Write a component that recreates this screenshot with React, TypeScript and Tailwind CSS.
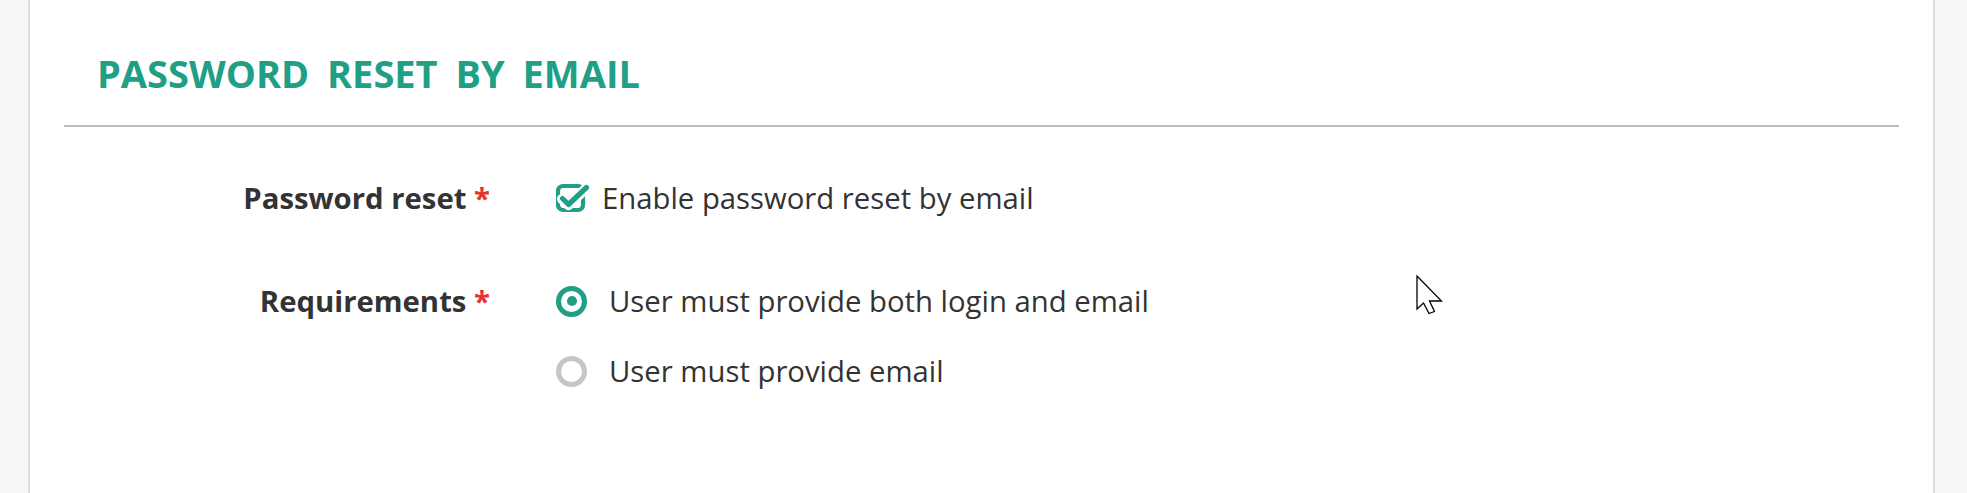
import React from "react";

const TEAL = "#1fa086";

function CheckIcon() {
  return (
    <svg width="34" height="32" viewBox="0 0 34 32" className="block">
      <rect x="2" y="4" width="25" height="24" rx="5" fill="none" stroke={TEAL} strokeWidth="4.2" />
      <path d="M6 17 L12.5 23 L31 5.5" fill="none" stroke="#ffffff" strokeWidth="10" strokeLinecap="round" strokeLinejoin="round" />
      <path d="M6.5 16.5 L12.5 22.5 L30.5 5.5" fill="none" stroke={TEAL} strokeWidth="5.2" strokeLinecap="round" strokeLinejoin="round" />
    </svg>
  );
}

function Radio({ checked }: { checked: boolean }) {
  return checked ? (
    <span className="flex h-[31px] w-[31px] shrink-0 items-center justify-center rounded-full border-[5px] border-[#1fa086]">
      <span className="h-[10px] w-[10px] rounded-full bg-[#1fa086]" />
    </span>
  ) : (
    <span className="h-[31px] w-[31px] shrink-0 rounded-full border-[5px] border-[#c3c6cb]" />
  );
}

function Cursor() {
  return (
    <svg width="28" height="40" viewBox="-1 -1 28 40" className="absolute left-[1416px] top-[275px]">
      <path
        d="M0 0 L0 33 L6.5 27 L12 37.5 L17.5 35.5 L12.5 25 L24.5 25 Z"
        fill="#ffffff"
        stroke="#000000"
        strokeWidth="1.3"
        strokeLinejoin="miter"
      />
    </svg>
  );
}

export default function App() {
  return (
    <div className="relative flex h-[493px] w-full overflow-hidden bg-[#f6f6f8] font-['Open_Sans',sans-serif] text-[#333333]">
      <div className="ml-[28px] mr-[32px] flex-1 border-x-2 border-[#dcdcdc] bg-white px-[34px]">
        <div className="border-b-2 border-[#babec3] pb-[26px] pl-[33px] pt-[47px]">
          <h2 className="text-[38px] font-bold leading-[52px] text-[#1fa086] [word-spacing:8px]">
            PASSWORD RESET BY EMAIL
          </h2>
        </div>

        <div className="mt-[51px] grid grid-cols-[426px_1fr] gap-x-[66px] gap-y-[63px] text-[29.3px] leading-[40px]">
          <div className="text-right font-bold">
            Password reset <span className="text-[#e8322b]">*</span>
          </div>
          <div className="flex items-center">
            <CheckIcon />
            <span className="ml-[12px]">Enable password reset by email</span>
          </div>

          <div className="text-right font-bold">
            Requirements <span className="text-[#e8322b]">*</span>
          </div>
          <div className="flex flex-col gap-[30px]">
            <div className="flex items-center gap-[22px]">
              <Radio checked={true} />
              <span>User must provide both login and email</span>
            </div>
            <div className="flex items-center gap-[22px]">
              <Radio checked={false} />
              <span>User must provide email</span>
            </div>
          </div>
        </div>
      </div>
      <Cursor />
    </div>
  );
}
